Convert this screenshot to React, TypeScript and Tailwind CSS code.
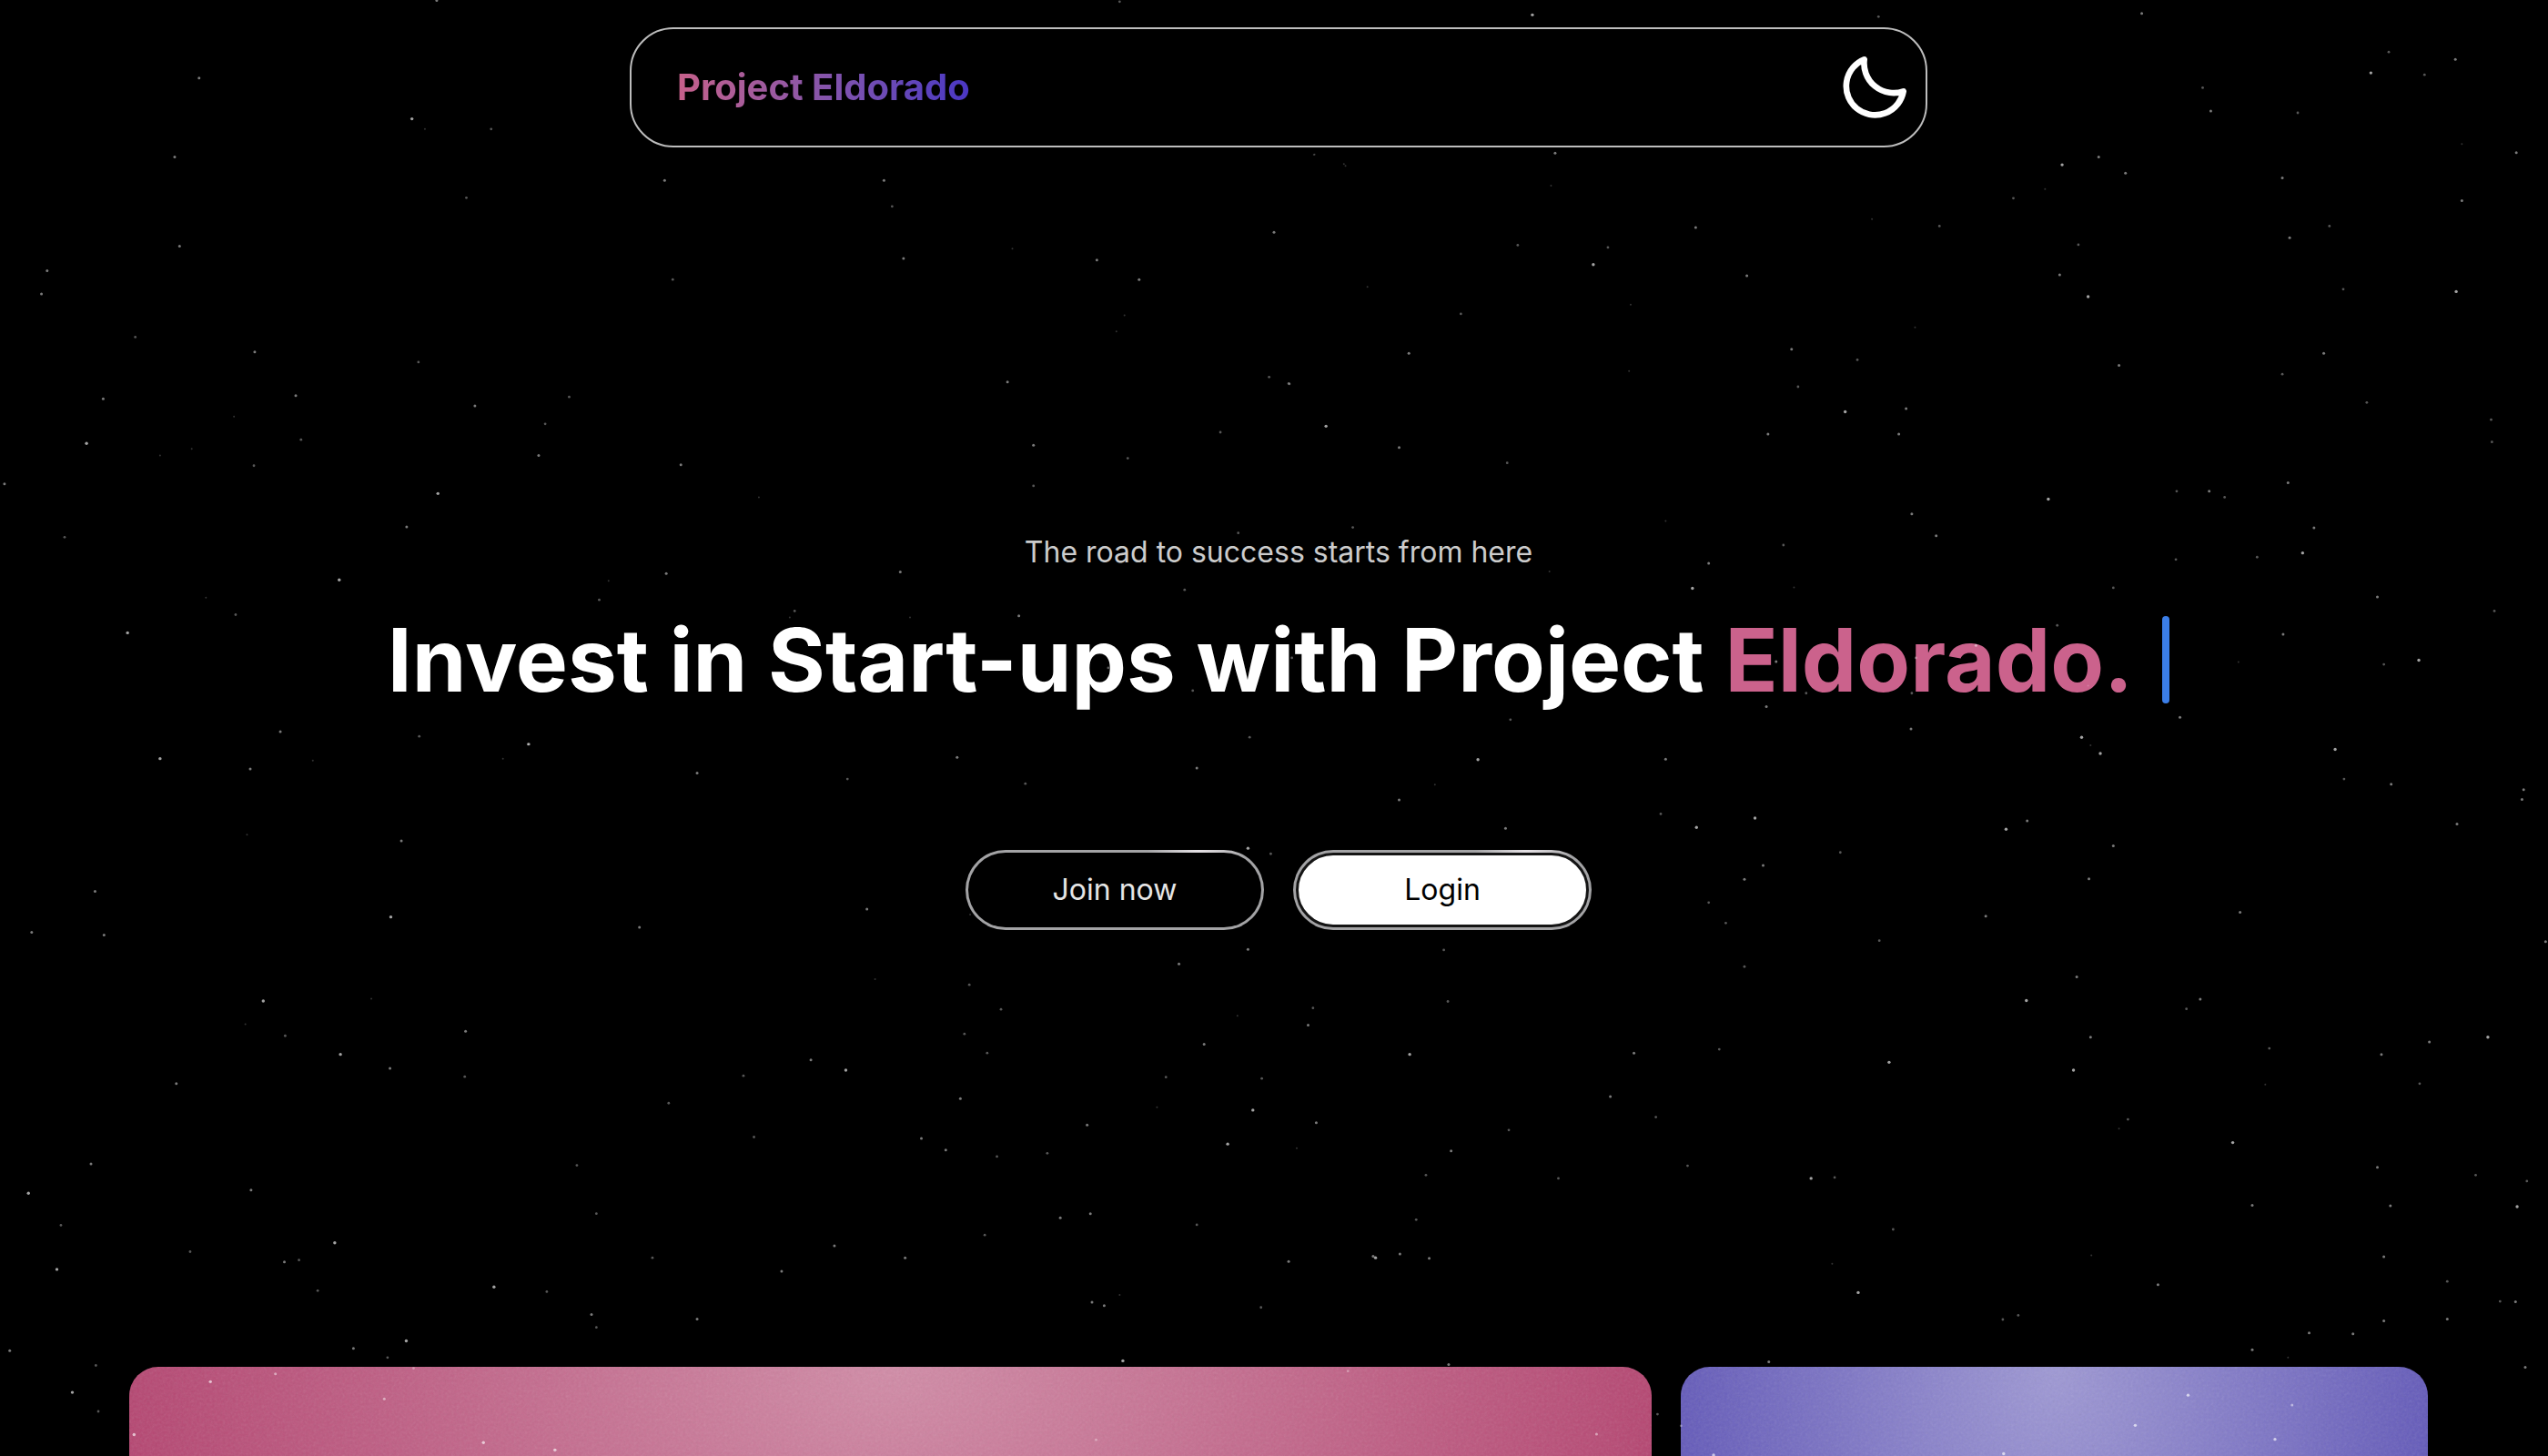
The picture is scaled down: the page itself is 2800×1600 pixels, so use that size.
import React from "react";

type Sector = {
  x: number;
  y: number;
  stepX: number;
  stepY: number;
  stars: [number, number, number][];
};

// The sky is divided into sectors; each star is [x, y, brightness 1-4] on its sector's grid.
const sectors: Sector[] = [
  {
    x: 0, y: 0, stepX: 2.24, stepY: 1.96,
    stars: [
      [1075, 1, 3], [490, 168, 3], [1014, 256, 4], [1046, 278, 1], [1209, 278, 2], [430, 338, 3], [1148, 426, 2],
      [442, 530, 3], [116, 583, 3], [102, 633, 3], [333, 726, 2], [627, 758, 3], [1030, 780, 2], [254, 859, 3],
      [728, 852, 3], [576, 897, 1], [472, 967, 1], [394, 981, 1], [213, 955, 4], [741, 947, 2], [625, 1003, 2],
      [1169, 874, 3], [1401, 855, 2], [1342, 913, 2], [1326, 981, 3], [1078, 1063, 4], [1001, 1135, 3], [11, 1042, 3],
      [159, 1157, 2], [835, 1249, 4], [507, 1287, 1], [580, 1324, 2], [314, 1363, 4], [1498, 1251, 1], [1475, 1292, 2],
    ],
  },
  {
    x: 0, y: 0, stepX: 0.56, stepY: 0.56,
    stars: [
      [409, 111, 3], [544, 111, 3], [549, 127, 2], [556, 159, 3], [414, 172, 2], [623, 153, 1], [675, 160, 3],
      [701, 172, 3], [689, 1, 2], [692, 194, 1], [687, 204, 1], [419, 286, 3], [467, 306, 1], [620, 235, 3],
      [636, 274, 3], [636, 299, 2], [694, 282, 2], [784, 143, 3], [751, 266, 2], [781, 232, 2], [793, 236, 2],
      [827, 101, 1], [809, 95, 1], [762, 328, 2], [410, 353, 3], [489, 376, 2], [486, 380, 1],
      [554, 352, 3], [560, 380, 1], [627, 379, 3], [729, 363, 2], [682, 411, 2], [734, 425, 2],
      [325, 458, 3],
    ],
  },
  {
    x: 1400, y: 0, stepX: 1.12, stepY: 1.96,
    stars: [
      [318, 32, 4], [744, 36, 2], [1068, 29, 3], [1372, 112, 2], [1454, 128, 3], [1350, 157, 4], [1416, 161, 2],
      [1143, 189, 2], [1153, 239, 3], [1260, 243, 2], [1462, 310, 1], [1529, 329, 3], [346, 330, 3], [49, 333, 1],
      [88, 357, 1], [341, 400, 1], [970, 355, 4], [1015, 338, 3], [1048, 373, 3], [1241, 383, 3], [949, 407, 1],
      [910, 427, 2], [1462, 432, 3], [519, 490, 3], [736, 472, 1], [819, 487, 2], [1299, 487, 2],
      [300, 528, 2], [411, 533, 2], [393, 570, 4], [990, 527, 2], [1250, 512, 3], [582, 594, 3], [967, 592, 3],
      [115, 618, 1], [1316, 623, 2], [1455, 628, 4], [1002, 639, 4], [230, 676, 2], [439, 656, 1], [789, 705, 1],
      [166, 761, 3], [637, 752, 3], [718, 775, 2], [437, 799, 1], [1040, 787, 3], [1292, 761, 3], [1241, 806, 2],
      [19, 827, 2], [645, 833, 2], [1345, 867, 2], [703, 887, 4], [778, 880, 3], [1498, 904, 2], [1499, 952, 2],
      [64, 918, 4], [154, 964, 3], [608, 935, 3], [769, 935, 3], [287, 997, 2], [1248, 1040, 3], [1111, 1058, 2],
      [1151, 1058, 3], [1170, 1071, 2], [953, 1075, 4], [785, 1107, 3], [97, 1136, 2], [482, 1122, 1], [815, 1154, 3],
      [627, 1174, 2], [1280, 1137, 3], [1110, 1205, 2], [1210, 1200, 2], [1266, 1191, 4], [535, 1213, 3],
      [339, 1231, 1], [640, 1265, 1], [515, 1267, 4], [1033, 1266, 2], [1358, 1286, 3], [1502, 1316, 2],
      [964, 1347, 2], [1242, 1366, 3], [1409, 1422, 4], [1366, 1431, 2], [1187, 1426, 1], [864, 1390, 3],
      [618, 1425, 3], [790, 1417, 2], [22, 1417, 2], [655, 1493, 2], [785, 1493, 2], [606, 1522, 3], [291, 1550, 2],
      [1115, 1545, 3], [1002, 1477, 1],
    ],
  },
  {
    x: 0, y: 800, stepX: 1.12, stepY: 1.96,
    stars: [
      [345, 8, 3], [516, 18, 2], [651, 35, 3], [197, 66, 4], [308, 88, 3], [385, 70, 1], [619, 66, 1], [858, 97, 3],
      [1043, 110, 2], [1178, 63, 3], [1262, 120, 2], [1473, 86, 3], [1538, 20, 2], [304, 230, 1], [494, 243, 3],
      [117, 352, 3], [481, 407, 4], [39, 440, 3], [128, 446, 3], [787, 429, 3], [1067, 390, 3], [1194, 402, 1],
      [1536, 259, 4], [1564, 271, 2], [1536, 477, 3], [1451, 508, 3], [1077, 541, 1], [1193, 553, 2], [324, 588, 4],
      [457, 583, 1], [302, 638, 1], [351, 663, 2], [573, 653, 3], [1187, 659, 2], [1232, 606, 2], [1523, 620, 1],
      [419, 703, 4], [480, 733, 3], [572, 751, 2], [217, 766, 3], [1215, 700, 2], [998, 715, 3], [1041, 737, 4],
      [915, 749, 2], [1482, 681, 3], [1435, 752, 2], [1553, 755, 2], [1182, 798, 3], [823, 808, 2], [1424, 817, 1],
      [1542, 823, 4], [1338, 855, 3], [1134, 884, 3], [928, 881, 2], [1164, 909, 3], [1227, 923, 2], [1289, 916, 2],
      [1511, 896, 4], [112, 939, 3], [710, 942, 2], [35, 1002, 4], [309, 995, 3], [734, 1046, 2], [1305, 1055, 3],
      [1342, 1046, 3], [75, 1071, 2], [1473, 1070, 2], [1212, 1092, 2], [412, 1109, 4], [1027, 1115, 3],
      [234, 1128, 2], [803, 1141, 2], [1114, 1141, 3], [368, 1146, 2], [350, 1150, 3], [70, 1166, 4], [962, 1170, 3],
      [608, 1204, 4], [391, 1212, 2], [673, 1214, 2], [1344, 1237, 3], [1359, 1244, 3], [1378, 1221, 1],
      [1552, 1248, 2], [728, 1263, 3], [858, 1273, 3], [734, 1291, 2], [12, 1341, 3], [500, 1320, 4], [435, 1336, 3],
      [477, 1356, 2], [1382, 1363, 4], [118, 1373, 2], [89, 1431, 4], [121, 1472, 2], [259, 1408, 4], [339, 1391, 3],
      [473, 1445, 3], [165, 1522, 4], [595, 1539, 4], [683, 1555, 4], [1349, 1533, 2], [509, 1379, 2],
    ],
  },
  {
    x: 1400, y: 800, stepX: 1.12, stepY: 1.96,
    stars: [
      [784, 2, 3], [994, 20, 4], [1005, 37, 1], [1017, 55, 4], [251, 68, 4], [482, 67, 3], [1306, 46, 4],
      [1317, 110, 2], [1375, 121, 3], [198, 122, 1], [154, 155, 3], [1538, 133, 3], [1536, 154, 3], [476, 185, 2],
      [592, 194, 4], [285, 216, 3], [520, 214, 4], [901, 218, 4], [927, 200, 3], [1456, 207, 3], [1033, 254, 3],
      [697, 268, 2], [602, 296, 3], [579, 326, 3], [1003, 325, 3], [535, 376, 2], [556, 420, 2], [876, 405, 3],
      [1189, 397, 3], [745, 458, 2], [1565, 460, 3], [209, 478, 2], [579, 514, 2], [988, 536, 3], [1140, 584, 3],
      [1123, 605, 2], [926, 587, 4], [214, 589, 2], [48, 603, 2], [42, 640, 3], [1005, 666, 3], [1494, 666, 4],
      [1422, 676, 3], [1225, 690, 2], [1363, 703, 3], [548, 692, 2], [443, 700, 3], [167, 703, 4], [757, 720, 4],
      [984, 737, 4], [1220, 768, 1], [1410, 766, 2], [414, 794, 3], [470, 838, 2], [52, 850, 3], [289, 866, 2],
      [1051, 843, 2], [1040, 863, 1], [1180, 893, 4], [28, 905, 1], [218, 911, 3], [509, 943, 2], [1358, 946, 3],
      [187, 963, 2], [350, 970, 2], [661, 970, 4], [690, 968, 2], [1479, 963, 2], [1542, 976, 2], [1204, 1028, 3],
      [1374, 1029, 3], [1530, 1031, 4], [175, 1059, 2], [762, 1080, 2], [155, 1133, 3], [122, 1138, 3],
      [125, 1141, 4], [191, 1142, 3], [18, 1149, 3], [687, 1154, 1], [1006, 1136, 1], [1366, 1139, 3],
      [1444, 1192, 2], [1088, 1199, 3], [719, 1216, 4], [1509, 1235, 2], [1528, 1236, 3], [916, 1265, 2],
      [897, 1274, 2], [1366, 1277, 3], [1444, 1273, 3], [1274, 1303, 3], [1328, 1305, 3], [1204, 1339, 3],
      [1248, 1356, 1], [609, 1365, 3], [215, 1371, 3], [1540, 1377, 3], [472, 1478, 2], [501, 1503, 2],
      [1125, 1437, 4], [1253, 1458, 3], [1060, 1502, 4], [1232, 1532, 4], [898, 1563, 4], [541, 1566, 4],
      [397, 1521, 3], [91, 1385, 2],
    ],
  },
];

const brightness = [0, 0.2, 0.34, 0.48, 0.64];
const radius = [0, 1, 1.4, 1.5, 1.7];

function StarField() {
  return (
    <svg
      aria-hidden="true"
      viewBox="0 0 2800 1600"
      preserveAspectRatio="xMidYMin slice"
      className="pointer-events-none absolute inset-0 z-20 h-full w-full"
    >
      {sectors.map((s, i) => (
        <g key={i} fill="#fff">
          {s.stars.map(([x, y, b], k) => (
            <circle key={k} cx={s.x + x / s.stepX} cy={s.y + y / s.stepY} r={radius[b]} opacity={brightness[b]} />
          ))}
        </g>
      ))}
    </svg>
  );
}

function MoonIcon() {
  return (
    <svg
      viewBox="0 0 216 216"
      className="size-[72px]"
      fill="none"
      stroke="currentColor"
      strokeWidth="20"
      strokeLinejoin="round"
      aria-hidden="true"
    >
      <path d="M74 16A98 98 0 0 0 203 121A95 95 0 1 1 74 16Z" />
    </svg>
  );
}

function Header() {
  return (
    <header className="mx-auto flex h-[132px] w-[1426px] max-w-full items-center justify-between rounded-[48px] border-2 border-[#bdbdbd] bg-black pr-5 pl-[50px]">
      <a
        href="#"
        className="bg-linear-to-r from-[#c6608a] to-[#4a36c4] bg-clip-text text-[40px] leading-[56px] font-bold text-transparent"
      >
        Project Eldorado
      </a>
      <button type="button" aria-label="Toggle dark mode" className="text-white">
        <MoonIcon />
      </button>
    </header>
  );
}

function GlowButton({ children, filled = false }: { children: React.ReactNode; filled?: boolean }) {
  return (
    <button
      type="button"
      className="h-[88px] w-[328px] rounded-full bg-[#a3a3a5] bg-[radial-gradient(56px_16px_at_256px_0px,#e8e4e8,transparent)] p-[3px] text-[32px] leading-[48px]"
    >
      <span
        className={
          filled
            ? "flex h-full items-center justify-center rounded-full border-[3px] border-[#141414] bg-white text-black"
            : "flex h-full items-center justify-center rounded-full bg-black text-[#e5e5e5]"
        }
      >
        {children}
      </span>
    </button>
  );
}

function Grain() {
  return (
    <svg aria-hidden="true" className="absolute inset-0 h-full w-full opacity-15">
      <filter id="grain">
        <feTurbulence type="fractalNoise" baseFrequency="0.35" numOctaves="3" stitchTiles="stitch" />
        <feColorMatrix type="saturate" values="0" />
      </filter>
      <rect width="100%" height="100%" filter="url(#grain)" />
    </svg>
  );
}

export default function App() {
  return (
    <div className="relative h-screen overflow-hidden bg-black pt-[30px] pr-[132px] pl-[142px] font-['Inter',sans-serif] text-white">
      <StarField />
      <Header />
      <main>
        <section className="flex flex-col items-center pt-[421px]">
          <p className="text-[32px] leading-[48px] text-[#cccccc]">The road to success starts from here</p>
          <div className="mt-[30px] flex items-center gap-8">
            <h1 className="text-[96px] leading-[128px] font-bold whitespace-nowrap">
              Invest in Start-ups with Project <span className="text-[#cb628c]">Eldorado.</span>
            </h1>
            <span className="h-24 w-2 rounded-full bg-[#3b7ee8]" />
          </div>
          <div className="mt-[145px] flex gap-8">
            <GlowButton>Join now</GlowButton>
            <GlowButton filled>Login</GlowButton>
          </div>
        </section>
        <section className="mt-[480px] grid grid-cols-3 gap-8">
          <article className="relative col-span-2 h-[600px] overflow-hidden rounded-[32px] bg-[#b3406d] bg-[radial-gradient(55%_100%_at_top,rgba(255,255,255,0.4),transparent)]">
            <Grain />
          </article>
          <article className="relative h-[600px] overflow-hidden rounded-[32px] bg-[#5f55b8] bg-[radial-gradient(55%_100%_at_top,rgba(255,255,255,0.4),transparent)]">
            <Grain />
          </article>
        </section>
      </main>
    </div>
  );
}
